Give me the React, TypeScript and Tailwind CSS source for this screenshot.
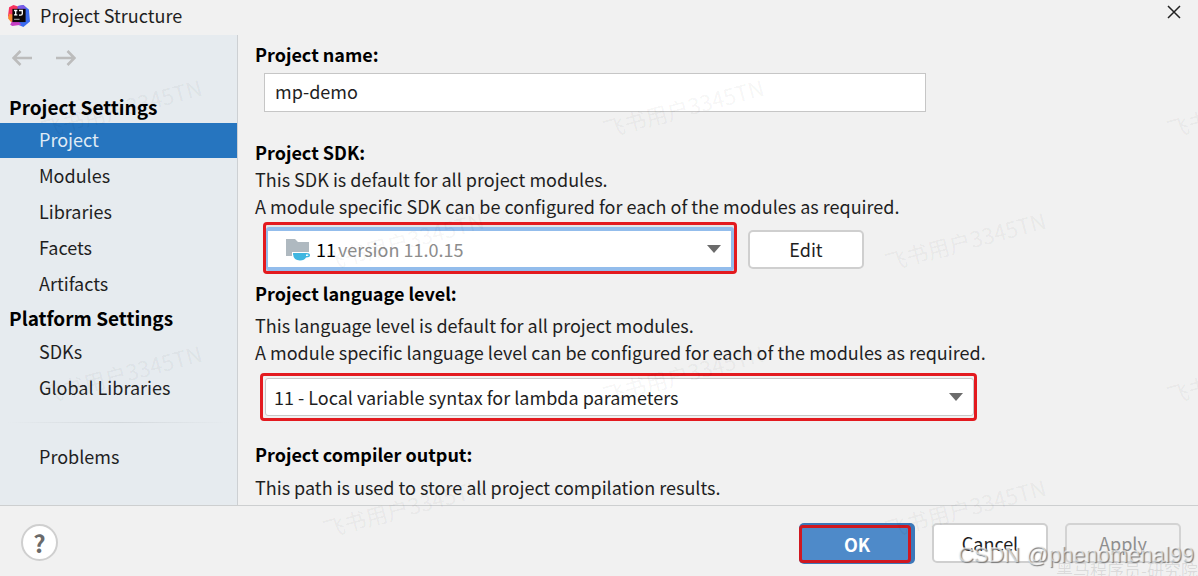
import React from "react";

const marks = [
  "left-[38px] top-[95px]",
  "left-[600px] top-[95px]",
  "left-[1164px] top-[95px]",
  "left-[320px] top-[228px]",
  "left-[882px] top-[228px]",
  "left-[38px] top-[361px]",
  "left-[600px] top-[361px]",
  "left-[1164px] top-[361px]",
  "left-[320px] top-[495px]",
  "left-[882px] top-[495px]",
];

function Logo() {
  return (
    <svg className="size-[22px]" viewBox="0 0 20 20" aria-hidden="true">
      <path d="M1 2L5 0l6 2-1 10-6 4-4-6z" fill="#f8325f" />
      <path d="M1 8l5 1-1 5-2 2-3-4z" fill="#fb8a2f" />
      <path d="M9 1l5-1 5 4 1 11-6 5-7-3z" fill="#3b6cf0" />
      <path d="M9 1l5-1 3 3-8 3z" fill="#7c5ae6" />
      <path d="M4 14l5 0 3 4-8 1-2-1z" fill="#c63fc4" />
      <rect x="4" y="3.500" width="12" height="12" fill="#0c0709" />
      <path d="M5.500 5h3M7 5v4M5.500 9h3M10 5h3v3q0 1.200-1.500 1.200H10" stroke="#fff" strokeWidth="1.200" fill="none" />
      <path d="M5.500 13h5" stroke="#aaa" strokeWidth="1" />
    </svg>
  );
}

function Arrow({ className = "" }: { className?: string }) {
  return (
    <svg className={"h-4 w-5 " + className} viewBox="0 0 20 16" fill="none" stroke="#bcbcbc" strokeWidth="2.600" aria-hidden="true">
      <path d="M20 8H1.500M8.500 1L1.500 8l7 7" />
    </svg>
  );
}

function Caret() {
  return (
    <svg className="pointer-events-none absolute right-[10px] h-2 w-3.5" viewBox="0 0 14 8" aria-hidden="true">
      <path d="M0 0h14L7 8z" fill="#6b6b6b" />
    </svg>
  );
}

function NavItem({ children, active = false }: { children: string; active?: boolean }) {
  return (
    <li>
      <a
        href="#"
        aria-current={active ? "page" : undefined}
        className={active ? "flex h-[35px] items-center bg-[#2675bf] pb-[2px] pl-[39px] text-[#dfeaf5]" : "flex h-[35px] items-center pb-[2px] pl-[39px]"}
      >
        {children}
      </a>
    </li>
  );
}

export default function App() {
  return (
    <div className="relative flex min-h-screen flex-col overflow-hidden bg-[#f1f1f1] font-['Noto_Sans_CJK_SC',sans-serif] text-[18px] leading-[27px] text-[#1f1f1f]">
      <header className="flex h-[35px] items-center gap-[10px] pr-4 pb-1 pl-2">
        <Logo />
        <h1 className="flex-1">Project Structure</h1>
        <button aria-label="Close" className="self-start pt-1">
          <svg className="size-4" viewBox="0 0 16 16" stroke="#222" strokeWidth="1.500" aria-hidden="true">
            <path d="M2 2l12 12M14 2L2 14" />
          </svg>
        </button>
      </header>

      <div className="flex flex-1">
        <nav className="w-[238px] shrink-0 border-r border-[#cdd0d3] bg-[#e6ebef]">
          <div className="flex gap-6 px-3 pt-[15px] pb-[27px]">
            <button aria-label="Back"><Arrow /></button>
            <button aria-label="Forward"><Arrow className="rotate-180" /></button>
          </div>
          <h2 className="px-[9px] pb-[3px] text-[19px] font-bold text-black">Project Settings</h2>
          <ul className="flex flex-col gap-px">
            <NavItem active>Project</NavItem>
            <NavItem>Modules</NavItem>
            <NavItem>Libraries</NavItem>
            <NavItem>Facets</NavItem>
            <NavItem>Artifacts</NavItem>
          </ul>
          <h2 className="px-[9px] pt-[2px] pb-1 text-[19px] font-bold text-black">Platform Settings</h2>
          <ul className="flex flex-col gap-px">
            <NavItem>SDKs</NavItem>
            <NavItem>Global Libraries</NavItem>
          </ul>
          <div className="mx-2 mt-4 mb-[17px] h-px bg-linear-to-r from-transparent via-[#d3d8dc] to-transparent" />
          <ul>
            <NavItem>Problems</NavItem>
          </ul>
        </nav>

        <main className="min-w-0 flex-1 pt-[6px] pl-[17px]">
          <label htmlFor="name" className="block font-bold text-black">Project name:</label>
          <input
            id="name"
            defaultValue="mp-demo"
            className="mt-[5px] ml-[9px] block h-[39px] w-[662px] max-w-full border border-[#c6c6c6] bg-white px-[10px] pb-[3px] outline-none"
          />
          <label htmlFor="sdk" className="mt-[27px] block font-bold text-black">Project SDK:</label>
          <p>This SDK is default for all project modules.</p>
          <p>A module specific SDK can be configured for each of the modules as required.</p>
          <div className="mt-[2px] ml-2 flex items-center gap-[11px]">
            <div className="w-[474px] rounded-[4px] border-3 border-[#e31a1f] bg-[#e6e6e6] pt-[2px]">
              <div className="relative flex h-[44px] items-center rounded-[3px] border-4 border-r-3 border-l-2 border-[#93bdec] bg-white">
                <svg className="pointer-events-none absolute left-[18px] size-6" viewBox="0 0 24 24" aria-hidden="true">
                  <path d="M0 2h9l3 3h11v10H6v4H0z" fill="#afb9c0" />
                  <path d="M7 16h13.500q3.500 0 3.500 2.200t-4 2.300q-1.500 3-6 3-7 0-7-7.500z" fill="#40b6e0" />
                  <path d="M20 17.500h1.500q1 0 1 .8t-2.500.7z" fill="#fff" />
                </svg>
                <select id="sdk" className="size-full appearance-none pl-[48px] text-black outline-none">
                  <option>11</option>
                </select>
                <span className="pointer-events-none absolute left-[70px] text-[#8c8c8c]">version 11.0.15</span>
                <Caret />
              </div>
            </div>
            <button className="mt-[2px] h-[39px] w-[116px] rounded-[5px] border-2 border-[#cfcfcf] bg-white">Edit</button>
          </div>
          <label htmlFor="level" className="mt-[6px] block font-bold text-black">Project language level:</label>
          <p className="mt-[5px]">This language level is default for all project modules.</p>
          <p>A module specific language level can be configured for each of the modules as required.</p>
          <div className="mt-[7px] ml-[5px] w-[717px] max-w-full rounded-[4px] border-3 border-[#e31a1f] p-[2px] pr-0">
            <div className="relative flex h-[38px] items-center rounded-[3px] border border-[#c8c8c8] bg-white">
              <select id="level" className="size-full appearance-none pl-[8px] outline-none">
                <option>11 - Local variable syntax for lambda parameters</option>
              </select>
              <Caret />
            </div>
          </div>
          <h2 className="mt-5 font-bold text-black">Project compiler output:</h2>
          <p className="mt-[6px]">This path is used to store all project compilation results.</p>
        </main>
      </div>

      <footer className="flex h-[71px] items-center border-t border-[#cdcfd0] pr-[17px] pl-[21px]">
        <button aria-label="Help" className="mt-[3px] mr-auto size-[37px] rounded-full border-2 border-[#cfcfcf] bg-white text-[24px] leading-none font-bold text-[#6a6a6a]">?</button>
        <div className="mt-1 flex items-center gap-[17px]">
          <button className="h-[41px] w-[116px] rounded-[5px] bg-[#3c78b9] pt-[2px] pr-1">
            <span className="flex h-[38px] items-center justify-center rounded-[4px] border-3 border-[#d01820] bg-[#4e8ac9] pl-1 font-bold text-white">OK</span>
          </button>
          <button className="h-[40px] w-[116px] rounded-[5px] border-2 border-[#cfcfcf] bg-white">Cancel</button>
          <button className="h-[40px] w-[116px] rounded-[5px] border-2 border-[#d3d3d3] text-[#8e8e8e]">Apply</button>
        </div>
      </footer>

      <div className="pointer-events-none absolute inset-0 overflow-hidden">
        {marks.map((m) => (
          <span key={m} className={"absolute -rotate-[15deg] text-[22px] leading-6 whitespace-nowrap text-black/5 " + m}>飞书用户3345TN</span>
        ))}
        <span className="absolute right-0 -bottom-[7px] text-[17px] whitespace-nowrap text-black/10">黑马程序员-研究院</span>
        <span className="absolute right-1 bottom-2 font-['Liberation_Sans',sans-serif] text-[22px] whitespace-nowrap text-white/60 [text-shadow:1px_1px_1px_#777]">CSDN @phenomenal99</span>
      </div>
    </div>
  );
}
